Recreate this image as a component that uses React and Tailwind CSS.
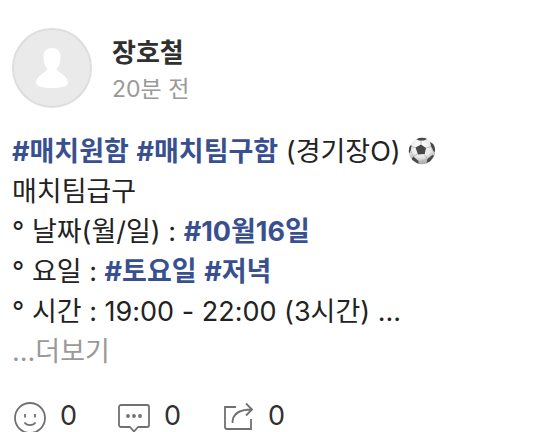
import React from 'react';

function Avatar() {
  return (
    <svg viewBox="0 0 80 80" className="size-20 shrink-0" role="img" aria-label="프로필 사진">
      <circle cx="40" cy="40" r="39" fill="#eaeaea" stroke="#dedede" strokeWidth="2" />
      <path
        d="M40 20c-5.200 0-8.500 3-8.500 8.500 0 5.500 1 9.500 4 12.500-2 4-11.500 6.500-11.500 14 0 3.300 7.200 5 16 5s16-1.700 16-5c0-7.500-9.500-10-11.500-14 3-3 4-7 4-12.500 0-5.500-3.300-8.500-8.500-8.500Z"
        fill="#fff"
      />
    </svg>
  );
}

function SoccerBall() {
  return (
    <svg viewBox="0 0 28 28" className="inline-block size-7 align-[-4px]" role="img" aria-label="축구공">
      <defs>
        <radialGradient id="ball" cx="0.45" cy="0.3" r="0.72">
          <stop offset="0" stopColor="#fff" />
          <stop offset="0.6" stopColor="#e8e8e8" />
          <stop offset="1" stopColor="#a0a0a0" />
        </radialGradient>
        <clipPath id="ball-edge">
          <circle cx="14" cy="14" r="13.200" />
        </clipPath>
      </defs>
      <circle cx="14" cy="14" r="13.200" fill="url(#ball)" />
      <g clipPath="url(#ball-edge)">
        <g stroke="#b0b0b0" strokeWidth="0.8" fill="none">
          <path d="M13 7.500V3M18 11l5-1.500M16.500 17.500l3 4.500M9.500 17l-4 2.500M7.500 10.500 3.500 9.500M23 9l2.500 6M19.500 22l5-4M19.500 22l-8 3M5.500 19.500l5 5M5.500 19.500 2 13" />
        </g>
        <g fill="#484848">
          <path d="m7.500 10.500 5.500-3 5 3.500-1.300 6-6.700.5Z" />
          <path d="m8 2 4-2h5l2 2-3 1.500h-5Z" />
          <path d="m23 9-1-4 5 3v7l-1.500-1Z" />
          <path d="m19.500 22 5-4 1.500 1-4.500 6-3 .5Z" />
          <path d="m5 19.500 5.500 4.500v3l-7-4.500Z" />
          <path d="m0 10 3.500-2-.3 4-1.700 4H0Z" />
        </g>
      </g>
    </svg>
  );
}

function SmileIcon() {
  return (
    <svg viewBox="0 0 32 32" className="size-8" fill="none" stroke="#707070" strokeWidth="1.800" aria-hidden="true">
      <circle cx="16" cy="16" r="15" />
      <path d="M11 12v3.500M21 12v3.500" />
      <path d="M10.500 20.500c2.500 3.500 8.500 3.500 11 0" />
    </svg>
  );
}

function CommentIcon() {
  return (
    <svg viewBox="0 0 32 32" className="size-8" fill="none" stroke="#707070" strokeWidth="1.800" aria-hidden="true">
      <path d="M3 3h26a2 2 0 0 1 2 2v18a2 2 0 0 1-2 2h-9l-4 4.500-4-4.500H3a2 2 0 0 1-2-2V5a2 2 0 0 1 2-2Z" strokeLinejoin="round" />
      <g fill="#707070" stroke="none">
        <circle cx="10" cy="14" r="1.900" />
        <circle cx="16" cy="14" r="1.900" />
        <circle cx="22" cy="14" r="1.900" />
      </g>
    </svg>
  );
}

function ShareIcon() {
  return (
    <svg viewBox="0 0 32 32" className="size-8" fill="none" stroke="#707070" strokeWidth="1.800" aria-hidden="true">
      <path d="M14 5H3v20a2 2 0 0 0 2 2h24V17" />
      <path d="M10.500 21C10.500 12 17 7.500 29.500 7.500M24 1.500l6 6-6 6" />
    </svg>
  );
}

function Tag({ children }) {
  return <a href="#tag" className="font-bold text-[#385090]">{children}</a>;
}

function Action({ icon, label, count }) {
  return (
    <button type="button" aria-label={label} className="flex h-8 gap-3.5 leading-7 text-[#303030]">
      {icon}
      <span>{count}</span>
    </button>
  );
}

export default function App() {
  return (
    <main className="h-screen overflow-hidden bg-white px-3 pt-7 font-['Inter','Noto_Sans_CJK_KR',sans-serif] text-[27px] leading-10 text-[#222]">
      <header className="flex items-center gap-5">
        <Avatar />
        <div className="pt-1.5">
          <h1 className="text-[26px] leading-9 font-bold text-[#303030]">장호철</h1>
          <time className="block text-[23px] leading-9 text-[#999]">20분 전</time>
        </div>
      </header>
      <article className="mt-6">
        <p>
          <Tag>#매치원함</Tag> <Tag>#매치팀구함</Tag> (경기장O) <SoccerBall />
        </p>
        <p>매치팀급구</p>
        <p>° 날짜(월/일) : <Tag>#10월16일</Tag></p>
        <p>° 요일 : <Tag>#토요일</Tag> <Tag>#저녁</Tag></p>
        <p>° 시간 : 19:00 - 22:00 (3시간) ...</p>
        <button type="button" className="block text-[#999]">...더보기</button>
      </article>
      <footer className="mt-[30px] flex gap-[41px] px-0.5">
        <Action icon={<SmileIcon />} label="표정 0" count={0} />
        <Action icon={<CommentIcon />} label="댓글 0" count={0} />
        <Action icon={<ShareIcon />} label="공유 0" count={0} />
      </footer>
    </main>
  );
}
